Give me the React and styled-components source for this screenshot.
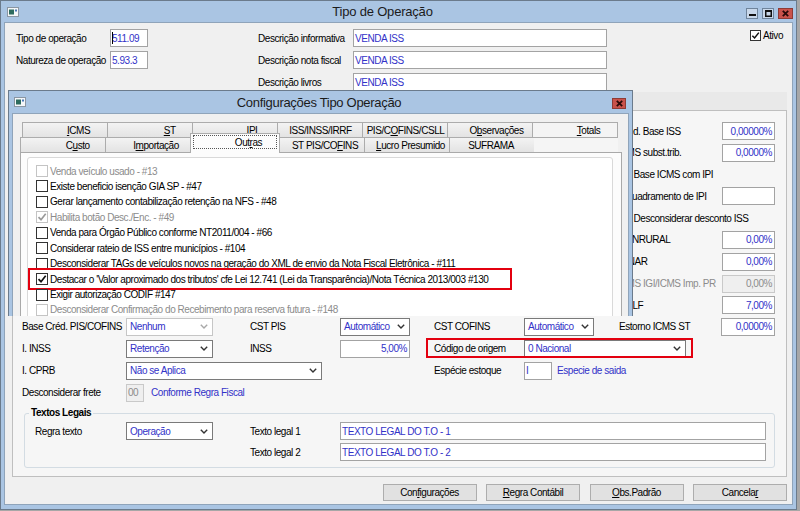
import React from 'react';
import styled, { createGlobalStyle, css } from 'styled-components';

const FONT = `"Liberation Sans", Arial, sans-serif`;
const BLUE = '#3232c8';
const FRAME = '#aac5e3';

const GlobalStyle = createGlobalStyle`
  * { box-sizing: border-box; }
  html, body { margin: 0; padding: 0; }
  body {
    width: 800px;
    height: 511px;
    overflow: hidden;
    background: #a7a7a7;
    font-family: ${FONT};
    font-size: 10px;
    letter-spacing: -0.45px;
    color: #000;
  }
`;

/* ---------- window chrome ---------- */
const Window = styled.div`
  position: relative;
  width: 797px;
  height: 510px;
  border: 1px solid #6b7b8c;
  background: ${FRAME};
  padding: 0 3px 4px;
  display: flex;
  flex-direction: column;
`;

const TitleBar = styled.div`
  flex: none;
  height: ${p => p.$h}px;
  display: flex;
  align-items: center;
`;

const TitleText = styled.div`
  flex: 1;
  text-align: center;
  font-size: 13px;
  letter-spacing: ${p => p.$spacing}px;
  color: #1b1b1b;
  white-space: nowrap;
`;

const IconWrap = styled.span`
  flex: none;
  display: flex;
  margin-left: ${p => p.$left}px;
`;

const Controls = styled.div`
  flex: none;
  align-self: flex-start;
  display: flex;
  gap: 4px;
  margin-top: 7px;
  margin-right: ${p => p.$right}px;
`;

const CtrlButton = styled.div`
  width: ${p => p.$w}px;
  height: 11px;
  border: 1px solid ${p => (p.$close ? '#8f3b35' : '#6f849b')};
  background: ${p => (p.$close ? '#c9524b' : '#c9d8ea')};
  display: flex;
  align-items: center;
  justify-content: center;
`;

const AppIcon = () => (
  <svg width="12" height="10" viewBox="0 0 12 10">
    <rect x="0.5" y="0.5" width="11" height="9" fill="#f5f7f9" stroke="#8a96a3" />
    <rect x="2" y="2.5" width="5" height="5" fill="#2d6b5e" />
    <rect x="8" y="2.5" width="2" height="2" fill="#4a78b8" />
  </svg>
);

const MinGlyph = () => (
  <svg width="7" height="7" viewBox="0 0 7 7"><rect x="0" y="4" width="7" height="2" fill="#111" /></svg>
);
const MaxGlyph = () => (
  <svg width="7" height="7" viewBox="0 0 7 7">
    <rect x="0.75" y="0.75" width="5.5" height="5.5" fill="none" stroke="#111" strokeWidth="1.5" />
    <rect x="0" y="0" width="7" height="2" fill="#111" />
  </svg>
);
const CloseGlyph = () => (
  <svg width="7" height="7" viewBox="0 0 7 7">
    <path d="M0.8 0.8 L6.2 6.2 M6.2 0.8 L0.8 6.2" stroke="#2a0a08" strokeWidth="1.8" />
  </svg>
);

/* ---------- client area ---------- */
const Client = styled.div`
  flex: 1;
  min-height: 0;
  display: flex;
  flex-direction: column;
  background: #f0f0f0;
  border: 1px solid #8fa4ba;
  padding: 6px 5px 3px 7px;
`;

const TopForm = styled.div`
  flex: none;
  display: flex;
  flex-direction: column;
  gap: 4px;
  padding-left: 4px;
`;

const FormRow = styled.div`
  height: 18px;
  display: flex;
  align-items: center;
`;

const Label = styled.div`
  flex: none;
  width: ${p => p.$w}px;
  white-space: nowrap;
  color: ${p => (p.$disabled ? '#8c8c8c' : '#000')};
`;

const Spacer = styled.div`
  flex: none;
  width: ${p => p.$w}px;
`;

const TextBox = styled.div`
  position: relative;
  flex: none;
  width: ${p => p.$w}px;
  height: 18px;
  border: 1px solid ${p => (p.$disabled ? '#c9c9c9' : '#a3a3a3')};
  background: ${p => (p.$disabled ? '#efefef' : '#fff')};
  color: ${p => (p.$disabled ? '#8c8c8c' : BLUE)};
  display: flex;
  align-items: center;
  justify-content: ${p => (p.$right ? 'flex-end' : 'flex-start')};
  padding: 0 2px 0 1px;
  white-space: nowrap;
  overflow: hidden;
  ${p =>
    p.$caret &&
    css`
      &::before {
        content: '';
        position: absolute;
        left: 1px;
        top: 2px;
        bottom: 2px;
        width: 1px;
        background: #000;
      }
    `}
`;

const SelectBox = styled.div`
  flex: none;
  width: ${p => p.$w}px;
  height: 18px;
  border: 1px solid ${p => (p.$disabled ? '#c6c6c6' : '#7a7a7a')};
  background: #fff;
  color: ${BLUE};
  display: flex;
  align-items: center;
  justify-content: space-between;
  padding: 0 4px 0 3px;
  white-space: nowrap;
`;

const Chevron = ({ disabled }) => (
  <svg width="8" height="5" viewBox="0 0 8 5">
    <path d="M0.8 0.8 L4 4 L7.2 0.8" fill="none" stroke={disabled ? '#a8a8a8' : '#333'} strokeWidth="1.4" />
  </svg>
);

const Select = ({ w, disabled, children }) => (
  <SelectBox $w={w} $disabled={disabled}>
    <span>{children}</span>
    <Chevron disabled={disabled} />
  </SelectBox>
);

const LinkText = styled.div`
  flex: none;
  color: ${BLUE};
  white-space: nowrap;
`;

const CheckBox = styled.span`
  flex: none;
  width: ${p => p.$size}px;
  height: ${p => p.$size}px;
  border: 1px solid ${p => (p.$disabled ? '#c4c4c4' : '#333')};
  background: #fff;
  margin-right: 2px;
  display: flex;
  align-items: center;
  justify-content: center;
`;

const Check = ({ checked, disabled, size = 12 }) => (
  <CheckBox $size={size} $disabled={disabled}>
    {checked && (
      <svg width={size - 2} height={size - 2} viewBox="0 0 10 10">
        <path
          d="M1.5 5.2 L4 7.7 L8.7 1.8"
          fill="none"
          stroke={disabled ? '#9a9a9a' : '#111'}
          strokeWidth="1.7"
        />
      </svg>
    )}
  </CheckBox>
);

const Ativo = styled.div`
  align-self: flex-start;
  margin-left: auto;
  margin-right: 4px;
  display: flex;
  align-items: center;
  height: 12px;
`;

/* ---------- main tab page ---------- */
const MainTabs = styled.div`
  flex: 1;
  min-height: 0;
  margin-top: 1px;
  display: flex;
  flex-direction: column;
`;

const MainTabStrip = styled.div`
  flex: none;
  height: 18px;
  background: #e9e9e9;
`;

const MainPage = styled.div`
  flex: 1;
  min-height: 0;
  border: 1px solid #bfbfbf;
  background: #f6f6f6;
  padding: 11px 11px 8px 9px;
  display: flex;
  flex-direction: column;
`;

const UpperSection = styled.div`
  display: flex;
  justify-content: flex-end;
`;

const RightColumn = styled.div`
  width: 175px;
  display: flex;
  flex-direction: column;
  gap: 3.8px;
`;

const RightRow = styled.div`
  height: 18px;
  display: flex;
  align-items: center;
  white-space: nowrap;
  padding-left: ${p => p.$indent || 0}px;
  color: ${p => (p.$disabled ? '#8c8c8c' : '#000')};
`;

const RightLabel = styled.div`
  flex: 1;
  white-space: nowrap;
  padding-left: ${p => p.$indent}px;
  color: ${p => (p.$disabled ? '#8c8c8c' : '#000')};
`;

const LowerSection = styled.div`
  margin-top: 3.6px;
  display: flex;
  flex-direction: column;
  gap: 4px;
`;

const Highlight = styled.div`
  position: relative;
  flex: none;
  height: 18px;
  display: flex;
  align-items: center;
  padding: 0 7px 0 8px;
  &::after {
    content: '';
    position: absolute;
    left: 0;
    right: 0;
    top: -2px;
    bottom: 0;
    border: 2px solid #e3000f;
    pointer-events: none;
  }
`;

const Group = styled.fieldset`
  margin: 5.4px 0 0 2px;
  border: 1px solid #d3dce3;
  border-radius: 3px;
  padding: 3px 8px 6px 10px;
  display: flex;
  flex-direction: column;
  gap: 3px;
  min-inline-size: 0;
`;

const Legend = styled.legend`
  font-weight: bold;
  line-height: 12px;
  padding: 0 2px;
  margin-left: -6px;
`;

const ButtonBar = styled.div`
  flex: none;
  margin-top: 7px;
  height: 17px;
  display: flex;
  justify-content: flex-end;
  gap: 9.5px;
`;

const Button = styled.div`
  width: 94px;
  height: 17px;
  border: 1px solid #adadad;
  background: #e1e1e1;
  display: flex;
  align-items: center;
  justify-content: center;
  white-space: nowrap;
`;

const Under = styled.span`
  text-decoration: underline;
`;

function Mn({ text }) {
  const i = text.indexOf('&');
  if (i < 0) return text;
  return (
    <>
      {text.slice(0, i)}
      <Under>{text[i + 1]}</Under>
      {text.slice(i + 2)}
    </>
  );
}

/* ---------- dialog ---------- */
const Dialog = styled.div`
  position: absolute;
  left: 7px;
  top: 89px;
  z-index: 5;
  width: 625px;
  height: 226px;
  border: 1px solid #6b7b8c;
  border-bottom: none;
  background: ${FRAME};
  padding: 0 3px;
  display: flex;
  flex-direction: column;
  overflow: hidden;
`;

const DialogBody = styled.div`
  flex: 1;
  background: #f0f0f0;
  border: 1px solid #8fa4ba;
  border-bottom: none;
  padding: 8px 0 0 7px;
`;

const TabControl = styled.div`
  width: 602px;
  display: flex;
  flex-direction: column;
`;

const TabRow = styled.div`
  position: relative;
  z-index: ${p => p.$z};
  height: 15px;
  width: ${p => p.$w}px;
  margin-left: ${p => p.$ml}px;
  display: flex;
`;

const Tab = styled.div`
  flex: 1 1 0;
  min-width: 0;
  height: 100%;
  margin-left: -1px;
  &:first-child {
    margin-left: 0;
  }
  border: 1px solid #acacac;
  border-bottom: none;
  background: ${p => (p.$light ? '#f4f4f4' : 'linear-gradient(#f3f3f3, #e3e3e3)')};
  display: flex;
  align-items: center;
  justify-content: center;
  white-space: nowrap;
`;

const TabLabel = styled.span`
  flex: none;
  white-space: nowrap;
  padding: 0 ${p => Math.max(0, -p.$shift * 2)}px 0 ${p => Math.max(0, p.$shift * 2)}px;
`;

const SelectedTab = styled.div`
  flex: 1 1 0;
  min-width: 0;
  align-self: flex-start;
  height: 20px;
  margin: -4px 0 0 -1px;
  border: 1px solid #acacac;
  border-bottom: none;
  background: #fcfcfc;
  padding: 1px 2px 4px;
  display: flex;
`;

const FocusRing = styled.div`
  flex: 1;
  min-width: 0;
  border: 1px dotted #555;
  display: flex;
  align-items: center;
  justify-content: center;
  white-space: nowrap;
`;

const TabFiller = styled.div`
  flex: 1 1 0;
  margin-left: -1px;
  border-top: 1px solid #acacac;
  background: #f5f5f5;
`;

const TabPage = styled.div`
  height: 200px;
  border: 1px solid #a9a9a9;
  background: #fcfcfc;
  padding: 4px 8px 0 6px;
`;

const ListPanel = styled.div`
  height: 190px;
  border: 1px solid #d9d9d9;
  border-radius: 3px;
  background: #fff;
  padding: 5.3px 0 0 8px;
`;

const CheckRow = styled.div`
  position: relative;
  height: 15.44px;
  display: flex;
  align-items: center;
  white-space: nowrap;
  color: ${p => (p.$disabled ? '#8c8c8c' : '#000')};
  ${p =>
    p.$highlight &&
    css`
      &::after {
        content: '';
        position: absolute;
        left: -8px;
        top: -3px;
        bottom: -3px;
        width: 480px;
        border: 2px solid #e3000f;
        pointer-events: none;
      }
    `}
`;

/* ---------- data ---------- */
const backTabs = [
  { t: '&ICMS', s: 13.5 },
  { t: '&ST', s: 19.7 },
  { t: 'I&PI', s: 17 },
  { t: 'ISS/INSS/IRRF', s: 0.5 },
  { t: 'PIS/C&OFINS/CSLL', s: 0.5 },
  { t: 'O&bservações', s: 6.5 },
  { t: '&Totals', s: 13.5, light: true },
];

const frontTabs = [
  { t: 'C&usto', s: 14.7 },
  { t: 'I&mportação', s: 8 },
  { t: 'Out&ras', s: 13.5, selected: true },
  { t: 'ST PIS/CO&FINS', s: 3 },
  { t: '&Lucro Presumido', s: 3.5 },
  { t: 'SUFRAMA', s: -1 },
];

const options = [
  { t: 'Venda veículo usado - #13', d: true },
  { t: 'Existe beneficio isenção GIA SP - #47' },
  { t: 'Gerar lançamento contabilização retenção na NFS - #48' },
  { t: 'Habilita botão Desc./Enc. - #49', d: true, c: true },
  { t: 'Venda para Órgão Público conforme NT2011/004 - #66' },
  { t: 'Considerar rateio de ISS entre municípios - #104' },
  { t: 'Desconsiderar TAGs de veículos novos na geração do XML de envio da Nota Fiscal Eletrônica - #111' },
  {
    t: "Destacar o 'Valor aproximado dos tributos' cfe Lei 12.741 (Lei da Transparência)/Nota Técnica 2013/003 #130",
    c: true,
    h: true,
  },
  { t: 'Exigir autorização CODIF #147' },
  { t: 'Desconsiderar Confirmação do Recebimento para reserva futura - #148', d: true },
];

const buttons = ['Con&figurações', '&Regra Contábil', '&Obs.Padrão', 'Cancela&r'];

export default function App() {
  return (
    <>
      <GlobalStyle />
      <Window>
        <TitleBar $h={21}>
          <IconWrap $left={3}>
            <AppIcon />
          </IconWrap>
          <TitleText $spacing={-0.2}>Tipo de Operação</TitleText>
          <Controls $right={0}>
            <CtrlButton $w={12}>
              <MinGlyph />
            </CtrlButton>
            <CtrlButton $w={12}>
              <MaxGlyph />
            </CtrlButton>
            <CtrlButton $w={15} $close>
              <CloseGlyph />
            </CtrlButton>
          </Controls>
        </TitleBar>

        <Client>
          <TopForm>
            <FormRow>
              <Label $w={94}>Tipo de operação</Label>
              <TextBox $w={38} $caret>511.09</TextBox>
              <Spacer $w={110} />
              <Label $w={95}>Descrição informativa</Label>
              <TextBox $w={254}>VENDA ISS</TextBox>
              <Ativo>
                <Check checked size={11} />
                <span>Ativo</span>
              </Ativo>
            </FormRow>
            <FormRow>
              <Label $w={94}>Natureza de operação</Label>
              <TextBox $w={38}>5.93.3</TextBox>
              <Spacer $w={110} />
              <Label $w={95}>Descrição nota fiscal</Label>
              <TextBox $w={254}>VENDA ISS</TextBox>
            </FormRow>
            <FormRow>
              <Spacer $w={242} />
              <Label $w={95}>Descrição livros</Label>
              <TextBox $w={254}>VENDA ISS</TextBox>
            </FormRow>
          </TopForm>

          <MainTabs>
            <MainTabStrip />
            <MainPage>
              <UpperSection>
                <RightColumn>
                  <RightRow>
                    <RightLabel $indent={10.3}>% Red. Base ISS</RightLabel>
                    <TextBox $w={53} $right>0,00000%</TextBox>
                  </RightRow>
                  <RightRow>
                    <RightLabel $indent={6.7}>% ICMS subst.trib.</RightLabel>
                    <TextBox $w={53} $right>0,0000%</TextBox>
                  </RightRow>
                  <RightRow $indent={19.5}>
                    <Check />
                    <span>Base ICMS com IPI</span>
                  </RightRow>
                  <RightRow>
                    <RightLabel $indent={15.6}>Enquadramento de IPI</RightLabel>
                    <TextBox $w={53} />
                  </RightRow>
                  <RightRow $indent={19.5}>
                    <Check />
                    <span>Desconsiderar desconto ISS</span>
                  </RightRow>
                  <RightRow>
                    <RightLabel $indent={8.8}>% FUNRURAL</RightLabel>
                    <TextBox $w={53} $right>0,00%</TextBox>
                  </RightRow>
                  <RightRow>
                    <RightLabel $indent={4.6}>% SENAR</RightLabel>
                    <TextBox $w={53} $right>0,00%</TextBox>
                  </RightRow>
                  <RightRow>
                    <RightLabel $indent={6.7} $disabled>
                      % ICMS IGI/ICMS Imp. PR
                    </RightLabel>
                    <TextBox $w={53} $right $disabled>
                      0,00%
                    </TextBox>
                  </RightRow>
                  <RightRow>
                    <RightLabel $indent={17}>% I.LF</RightLabel>
                    <TextBox $w={53} $right>7,00%</TextBox>
                  </RightRow>
                </RightColumn>
              </UpperSection>

              <LowerSection>
                <FormRow>
                  <Label $w={104}>Base Créd. PIS/COFINS</Label>
                  <Select w={87} disabled>
                    Nenhum
                  </Select>
                  <Spacer $w={37} />
                  <Label $w={90}>CST PIS</Label>
                  <Select w={70}>Automático</Select>
                  <Spacer $w={24} />
                  <Label $w={90}>CST COFINS</Label>
                  <Select w={70}>Automático</Select>
                  <Spacer $w={25} />
                  <Label $w={102}>Estorno ICMS ST</Label>
                  <TextBox $w={54} $right>0,0000%</TextBox>
                </FormRow>
                <FormRow>
                  <Label $w={104}>I. INSS</Label>
                  <Select w={87}>Retenção</Select>
                  <Spacer $w={37} />
                  <Label $w={90}>INSS</Label>
                  <TextBox $w={70} $right>5,00%</TextBox>
                  <Spacer $w={16} />
                  <Highlight>
                    <Label $w={90}>Código de origem</Label>
                    <Select w={162}>0 Nacional</Select>
                  </Highlight>
                </FormRow>
                <FormRow>
                  <Label $w={104}>I. CPRB</Label>
                  <Select w={196}>Não se Aplica</Select>
                  <Spacer $w={112} />
                  <Label $w={90}>Espécie estoque</Label>
                  <TextBox $w={28}>I</TextBox>
                  <Spacer $w={5} />
                  <LinkText>Especie de saida</LinkText>
                </FormRow>
                <FormRow>
                  <Label $w={104}>Desconsiderar frete</Label>
                  <TextBox $w={18} $disabled>
                    00
                  </TextBox>
                  <Spacer $w={7} />
                  <LinkText>Conforme Regra Fiscal</LinkText>
                </FormRow>
              </LowerSection>

              <Group>
                <Legend>Textos Legais</Legend>
                <FormRow>
                  <Label $w={91}>Regra texto</Label>
                  <Select w={87}>Operação</Select>
                  <Spacer $w={37} />
                  <Label $w={90}>Texto legal 1</Label>
                  <TextBox $w={426}>TEXTO LEGAL DO T.O - 1</TextBox>
                </FormRow>
                <FormRow>
                  <Spacer $w={215} />
                  <Label $w={90}>Texto legal 2</Label>
                  <TextBox $w={426}>TEXTO LEGAL DO T.O - 2</TextBox>
                </FormRow>
              </Group>
            </MainPage>
          </MainTabs>

          <ButtonBar>
            {buttons.map(b => (
              <Button key={b}>
                <Mn text={b} />
              </Button>
            ))}
          </ButtonBar>
        </Client>

        <Dialog>
          <TitleBar $h={22}>
            <IconWrap $left={2}>
              <AppIcon />
            </IconWrap>
            <TitleText $spacing={-0.3}>Configurações Tipo Operação</TitleText>
            <Controls $right={3}>
              <CtrlButton $w={14} $close>
                <CloseGlyph />
              </CtrlButton>
            </Controls>
          </TitleBar>
          <DialogBody>
            <TabControl>
              <TabRow $w={596} $ml={2} $z={1}>
                {backTabs.map(t => (
                  <Tab key={t.t} $light={t.light}>
                    <TabLabel $shift={t.s}>
                      <Mn text={t.t} />
                    </TabLabel>
                  </Tab>
                ))}
              </TabRow>
              <TabRow $w={598} $ml={0} $z={2}>
                {frontTabs.map(t =>
                  t.selected ? (
                    <SelectedTab key={t.t}>
                      <FocusRing>
                        <TabLabel $shift={t.s}>
                          <Mn text={t.t} />
                        </TabLabel>
                      </FocusRing>
                    </SelectedTab>
                  ) : (
                    <Tab key={t.t}>
                      <TabLabel $shift={t.s}>
                        <Mn text={t.t} />
                      </TabLabel>
                    </Tab>
                  )
                )}
                <TabFiller />
              </TabRow>
              <TabPage>
                <ListPanel>
                  {options.map(o => (
                    <CheckRow key={o.t} $disabled={o.d} $highlight={o.h}>
                      <Check checked={o.c} disabled={o.d} />
                      <span>{o.t}</span>
                    </CheckRow>
                  ))}
                </ListPanel>
              </TabPage>
            </TabControl>
          </DialogBody>
        </Dialog>
      </Window>
    </>
  );
}
